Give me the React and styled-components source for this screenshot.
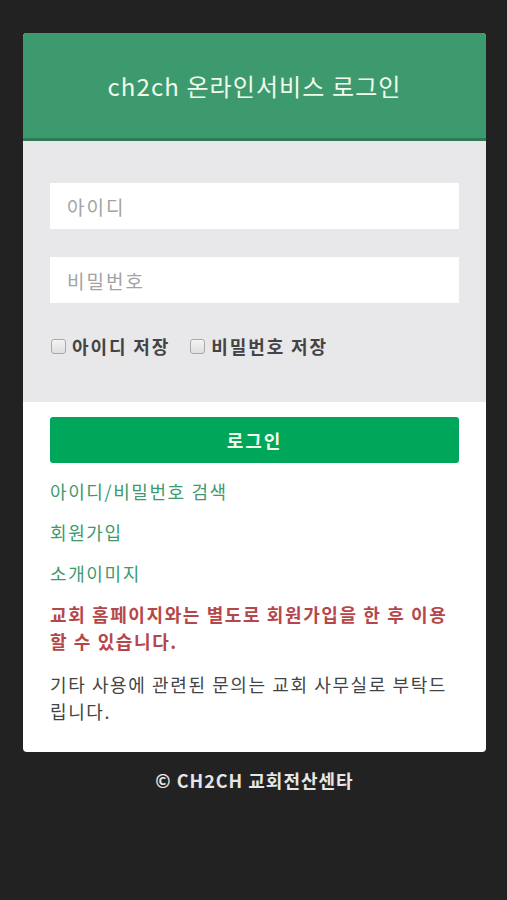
import React from 'react';
import styled, { createGlobalStyle } from 'styled-components';

const GlobalStyle = createGlobalStyle`
  html, body {
    margin: 0;
    padding: 0;
    background: #222222;
    font-family: "Noto Sans CJK KR", "Noto Sans", sans-serif;
  }
  * { box-sizing: border-box; }
`;

const Page = styled.div`
  min-height: 900px;
  background: #222222;
  padding: 33px 21px 0 23px;
`;

const Card = styled.div`
  background: #ffffff;
  border-radius: 4px;
  overflow: hidden;
`;

const Header = styled.div`
  background: #3d9a6f;
  border-bottom: 3px solid #2f7a57;
  height: 108px;
  display: flex;
  align-items: center;
  justify-content: center;
`;

const Title = styled.h1`
  margin: 0;
  color: #f0fbec;
  font-size: 24px;
  font-weight: 400;
  letter-spacing: 1.1px;
`;

const FormArea = styled.div`
  background: #e8e8ea;
  padding: 42px 27px 43px;
  display: flex;
  flex-direction: column;
  gap: 28px;
`;

const Input = styled.input`
  width: 100%;
  height: 46px;
  border: none;
  outline: none;
  background: #ffffff;
  padding: 0 17px;
  font-family: inherit;
  font-size: 19px;
  letter-spacing: 2px;
  color: #333;
  &::placeholder { color: #a3a3a3; }
`;

const CheckRow = styled.div`
  display: flex;
  align-items: center;
  gap: 19px;
  margin-top: 2px;
`;

const CheckLabel = styled.label`
  display: flex;
  align-items: center;
  gap: 6px;
  font-size: 18px;
  font-weight: 700;
  letter-spacing: 1.9px;
  color: #444444;
`;

const Box = styled.span`
  width: 15px;
  height: 15px;
  margin-left: 1px;
  border: 1px solid #a9a9a9;
  border-radius: 3px;
  background: linear-gradient(#f4f4f4, #dedede);
`;

const Body = styled.div`
  padding: 15px 27px 27px;
`;

const LoginButton = styled.button`
  width: 100%;
  height: 46px;
  border: none;
  border-radius: 3px;
  background: #00a65a;
  color: #f0fbec;
  font-family: inherit;
  font-size: 18px;
  font-weight: 700;
  letter-spacing: 2px;
  margin-bottom: 8px;
`;

const LinkItem = styled.a`
  display: block;
  color: #3d9a6f;
  font-size: 18px;
  letter-spacing: 1.6px;
  line-height: 41px;
  text-decoration: none;
`;

const Note = styled.p`
  margin: ${(p) => p.$mt}px 0 0;
  font-size: 18px;
  letter-spacing: 1.6px;
  line-height: 27px;
  font-weight: ${(p) => (p.$bold ? 700 : 400)};
  color: ${(p) => p.$color};
`;

const Footer = styled.div`
  text-align: center;
  color: #e6e6e6;
  font-size: 18px;
  font-weight: 700;
  letter-spacing: 1px;
  line-height: 26px;
  padding-top: 15px;
`;

export default function App() {
  return (
    <Page>
      <GlobalStyle />
      <Card>
        <Header>
          <Title>ch2ch 온라인서비스 로그인</Title>
        </Header>
        <FormArea>
          <Input placeholder="아이디" />
          <Input type="password" placeholder="비밀번호" />
          <CheckRow>
            <CheckLabel><Box />아이디 저장</CheckLabel>
            <CheckLabel><Box />비밀번호 저장</CheckLabel>
          </CheckRow>
        </FormArea>
        <Body>
          <LoginButton>로그인</LoginButton>
          <LinkItem href="#">아이디/비밀번호 검색</LinkItem>
          <LinkItem href="#">회원가입</LinkItem>
          <LinkItem href="#">소개이미지</LinkItem>
          <Note $bold $mt={7} $color="#b5474a">교회 홈페이지와는 별도로 회원가입을 한 후 이용할 수 있습니다.</Note>
          <Note $mt={16} $color="#444444">기타 사용에 관련된 문의는 교회 사무실로 부탁드립니다.</Note>
        </Body>
      </Card>
      <Footer>© CH2CH 교회전산센타</Footer>
    </Page>
  );
}
